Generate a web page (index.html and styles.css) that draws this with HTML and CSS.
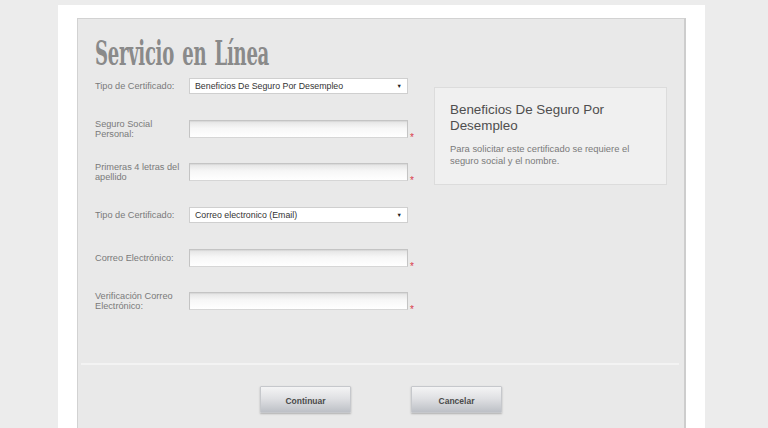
FILE: index.html
```html
<!DOCTYPE html>
<html lang="es">
<head>
<meta charset="utf-8">
<title>Servicio en Línea</title>
<link rel="stylesheet" href="styles.css">
</head>
<body>
<div class="page">
  <div class="panel">
    <h1 class="title"><span class="title-text">Servicio en Línea</span></h1>
    <div class="content">
      <form class="form">
        <div class="row">
          <label class="label">Tipo de Certificado:</label>
          <div class="select"><span>Beneficios De Seguro Por Desempleo</span><span class="arrow">▼</span></div>
        </div>
        <div class="row">
          <label class="label">Seguro Social<br>Personal:</label>
          <input class="input" type="text">
          <span class="req">*</span>
        </div>
        <div class="row">
          <label class="label">Primeras 4 letras del<br>apellido</label>
          <input class="input" type="text">
          <span class="req">*</span>
        </div>
        <div class="row">
          <label class="label">Tipo de Certificado:</label>
          <div class="select"><span>Correo electronico (Email)</span><span class="arrow">▼</span></div>
        </div>
        <div class="row">
          <label class="label">Correo Electrónico:</label>
          <input class="input" type="text">
          <span class="req">*</span>
        </div>
        <div class="row">
          <label class="label">Verificación Correo<br>Electrónico:</label>
          <input class="input" type="text">
          <span class="req">*</span>
        </div>
      </form>
      <div class="info">
        <h2 class="info-title">Beneficios De Seguro Por Desempleo</h2>
        <p class="info-text">Para solicitar este certificado se requiere el seguro social y el nombre.</p>
      </div>
    </div>
    <div class="sep"></div>
    <div class="buttons">
      <button class="btn" type="button">Continuar</button>
      <button class="btn" type="button">Cancelar</button>
    </div>
  </div>
</div>
</body>
</html>
```
FILE: styles.css
```css
html, body {
  margin: 0;
  padding: 0;
  height: 100%;
  overflow: hidden;
}
body {
  background: #ececec;
  font-family: "Liberation Sans", Arial, sans-serif;
}
.page {
  width: 609px;
  height: 423px;
  margin: 5px 0 0 58px;
  padding: 13px 19px 0 19px;
  background: #ffffff;
}
.panel {
  height: 420px;
  background: #e9e9e9;
  border: 1px solid #d2d2d2;
  border-right: 2px solid #cdcdcd;
  border-bottom: none;
  padding: 0 0 0 17px;
  box-sizing: border-box;
}
.title {
  margin: 0;
  height: 58px;
  line-height: 58px;
  font-weight: normal;
  white-space: nowrap;
}
.title-text {
  display: inline-block;
  font-family: "DejaVu Serif Condensed", "DejaVu Serif", serif;
  font-weight: bold;
  font-size: 34px;
  color: #8a8a8a;
  transform: scaleX(0.59);
  transform-origin: left center;
  letter-spacing: -0.5px;
  word-spacing: 4px;
  position: relative;
  top: 5px;
}
.content {
  display: flex;
}
.form {
  width: 339px;
  display: flex;
  flex-direction: column;
  gap: 26px;
}
.row {
  display: flex;
  align-items: center;
  height: 17px;
  position: relative;
}
.label {
  width: 94px;
  font-size: 9.2px;
  line-height: 10px;
  color: #7a7a7a;
}
.select {
  width: 219px;
  height: 16px;
  box-sizing: border-box;
  background: #ffffff;
  border: 1px solid #cfcfcf;
  display: flex;
  align-items: center;
  justify-content: space-between;
  padding: 0 5px 0 5px;
  font-size: 8.8px;
  color: #333;
}
.arrow {
  font-size: 5.5px;
  color: #222;
}
.input {
  width: 219px;
  height: 18px;
  box-sizing: border-box;
  margin: 0;
  padding: 0;
  border: 1px solid #c4c4c4;
  border-bottom-color: #d6d6d6;
  background: linear-gradient(#e4e4e4 0%, #f7f7f7 45%, #ffffff 100%);
  box-shadow: inset 0 1px 1px rgba(0,0,0,0.06);
}
.req {
  color: #d9394a;
  font-size: 10px;
  line-height: 10px;
  align-self: flex-end;
  margin: 0 0 -6px 2px;
}
.info {
  width: 233px;
  height: 98px;
  box-sizing: border-box;
  margin-top: 10px;
  background: #f0f0f0;
  border: 1px solid #dcdcdc;
  padding: 14px 20px 0 15px;
}
.info-title {
  margin: 0;
  font-size: 13.4px;
  line-height: 16px;
  font-weight: normal;
  color: #4e4e4e;
}
.info-text {
  margin: 9px 0 0 0;
  font-size: 9.4px;
  line-height: 12px;
  color: #7a7a7a;
}
.sep {
  height: 2px;
  background: #f3f3f3;
  margin: 54px 5px 0 -14px;
}
.buttons {
  display: flex;
  justify-content: center;
  gap: 60px;
  margin: 21px 0 0 -17px;
}
.btn {
  width: 91px;
  height: 27px;
  border: 1px solid #c6c8cc;
  border-radius: 1px;
  background: linear-gradient(#f4f4f5 0%, #e0e1e4 45%, #bdc0c6 100%);
  box-shadow: 0 1px 2px rgba(0,0,0,0.25);
  font-family: "Liberation Sans", Arial, sans-serif;
  font-weight: bold;
  font-size: 8.5px;
  color: #4a4a4a;
  padding: 2px 0 0 0;
}
```
